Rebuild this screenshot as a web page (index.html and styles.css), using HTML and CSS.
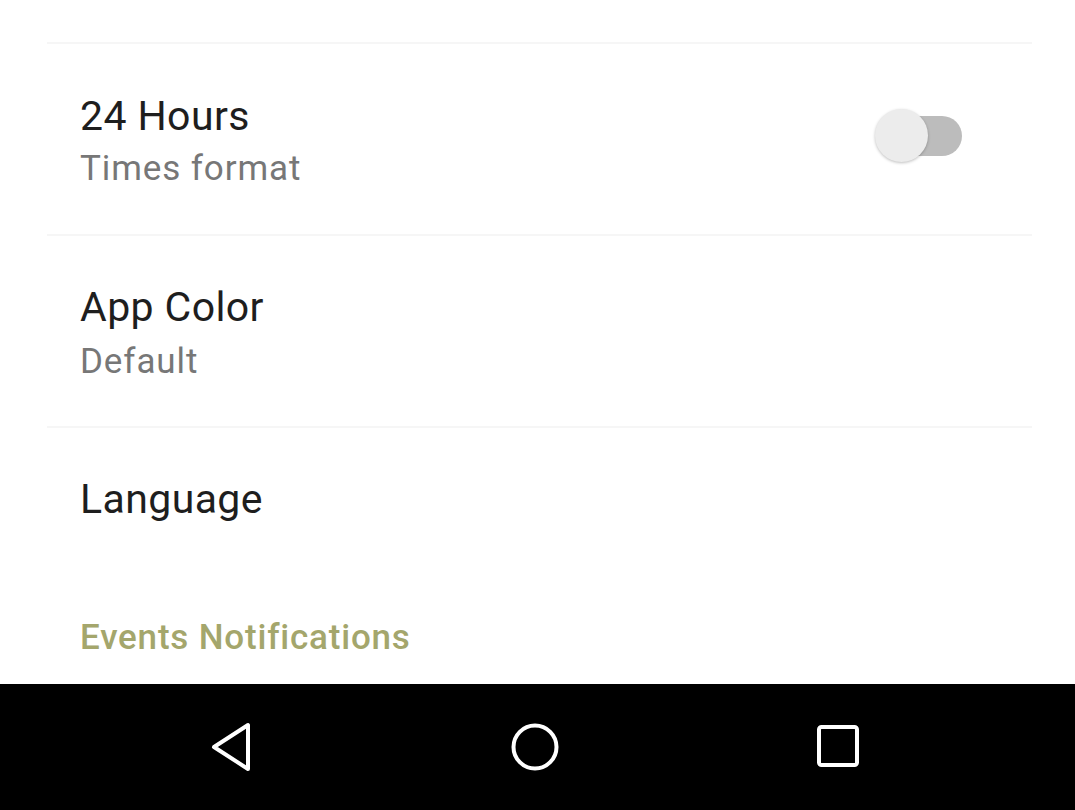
FILE: index.html
```html
<!DOCTYPE html>
<html>
<head>
<meta charset="utf-8">
<link rel="stylesheet" href="styles.css">
</head>
<body>
<div class="screen">
  <main class="settings">
    <div class="row row-switch">
      <div class="text">
        <div class="title">24 Hours</div>
        <div class="sub">Times format</div>
      </div>
      <div class="switch"><span class="thumb"></span></div>
    </div>
    <div class="row">
      <div class="text">
        <div class="title">App Color</div>
        <div class="sub">Default</div>
      </div>
    </div>
    <div class="row row-last">
      <div class="text">
        <div class="title">Language</div>
      </div>
    </div>
    <div class="section">Events Notifications</div>
  </main>
  <nav class="navbar">
    <svg class="nav-icon" width="48" height="52" viewBox="0 0 48 52"><path d="M41 4 L41 48 L7 26 Z" fill="none" stroke="#fff" stroke-width="4" stroke-linejoin="round"/></svg>
    <svg class="nav-icon" width="52" height="52" viewBox="0 0 52 52"><circle cx="26" cy="26" r="21.5" fill="none" stroke="#fff" stroke-width="4"/></svg>
    <svg class="nav-icon" width="48" height="48" viewBox="0 0 48 48"><rect x="5" y="4" width="38" height="38" rx="2.5" fill="none" stroke="#fff" stroke-width="4"/></svg>
  </nav>
</div>
</body>
</html>
```

FILE: styles.css
```css
html, body {
  margin: 0;
  padding: 0;
  background: #ffffff;
}
body {
  font-family: Roboto, "Liberation Sans", sans-serif;
  width: 1075px;
  height: 810px;
  overflow: hidden;
}
.screen {
  display: flex;
  flex-direction: column;
  height: 810px;
}
.settings {
  height: 684px;
  padding-top: 42px;
  box-sizing: border-box;
  display: flex;
  flex-direction: column;
}
.row {
  height: 192px;
  box-sizing: border-box;
  margin: 0 43px 0 47px;
  padding: 0 70px 0 33px;
  border-top: 2px solid #f6f6f6;
  display: flex;
  justify-content: space-between;
}
.row-last {
  height: 192px;
}
.text {
  padding-top: 48px;
}
.row + .row .text {
  padding-top: 47px;
}
.title {
  font-size: 41px;
  line-height: 48px;
  letter-spacing: 0.4px;
  color: #1e1e1e;
}
.sub {
  margin-top: 7px;
  font-size: 35px;
  line-height: 44px;
  letter-spacing: 0.9px;
  color: #777777;
}
.row + .row .sub {
  margin-top: 9px;
}
.section {
  margin-left: 80px;
  font-size: 35px;
  line-height: 40px;
  letter-spacing: 0.8px;
  font-weight: 500;
  color: #a4a66c;
}
.switch {
  align-self: center;
  position: relative;
  width: 72px;
  height: 40px;
  border-radius: 20px;
  background: #bcbcbc;
  margin-top: -6px;
}
.thumb {
  position: absolute;
  left: -15px;
  top: -7px;
  width: 53px;
  height: 53px;
  border-radius: 50%;
  background: #ececec;
  box-shadow: 0 1px 3px rgba(0,0,0,0.25);
}
.navbar {
  height: 126px;
  background: #000;
  display: flex;
  align-items: center;
  justify-content: space-between;
  padding: 0 213px 0 207px;
}
.nav-icon {
  display: block;
}
```
